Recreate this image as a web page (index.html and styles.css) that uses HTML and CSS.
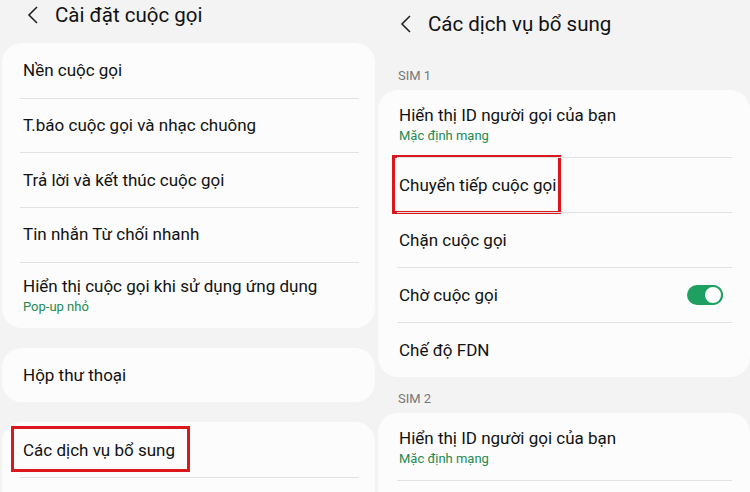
FILE: index.html
```html
<!DOCTYPE html>
<html lang="vi">
<head>
    <meta charset="UTF-8">
    <title>Cài đặt cuộc gọi</title>
    <link rel="stylesheet" href="styles.css">
</head>
<body>

<div class="screens">
    <!-- Màn hình 1: cài đặt cuộc gọi -->
    <section class="screen screen-left">
        <header class="topbar">
            <svg class="back" viewBox="0 0 12 20" width="12" height="20"><path d="M10 2 L2 10 L10 18" fill="none" stroke="#222" stroke-width="1.6"/></svg>
            <h1>Cài đặt cuộc gọi</h1>
        </header>

        <div class="card">
            <div class="row">Nền cuộc gọi</div>
            <div class="row">T.báo cuộc gọi và nhạc chuông</div>
            <div class="row">Trả lời và kết thúc cuộc gọi</div>
            <div class="row">Tin nhắn Từ chối nhanh</div>
            <div class="row two-line">
                <span>Hiển thị cuộc gọi khi sử dụng ứng dụng</span>
                <span class="sub">Pop-up nhỏ</span>
            </div>
        </div>

        <div class="card">
            <div class="row">Hộp thư thoại</div>
        </div>

        <div class="card">
            <div class="row"><span class="mark mark-services">Các dịch vụ bổ sung</span></div>
            <div class="row"></div>
        </div>
    </section>

    <!-- Màn hình 2: các dịch vụ bổ sung -->
    <section class="screen screen-right">
        <header class="topbar">
            <svg class="back" viewBox="0 0 12 20" width="12" height="20"><path d="M10 2 L2 10 L10 18" fill="none" stroke="#222" stroke-width="1.6"/></svg>
            <h1>Các dịch vụ bổ sung</h1>
        </header>

        <p class="group">SIM 1</p>
        <div class="card">
            <div class="row two-line">
                <span>Hiển thị ID người gọi của bạn</span>
                <span class="sub">Mặc định mạng</span>
            </div>
            <div class="row"><span class="mark mark-forward">Chuyển tiếp cuộc gọi</span></div>
            <div class="row">Chặn cuộc gọi</div>
            <div class="row">
                <span>Chờ cuộc gọi</span>
                <span class="switch"></span>
            </div>
            <div class="row">Chế độ FDN</div>
        </div>

        <p class="group">SIM 2</p>
        <div class="card">
            <div class="row two-line">
                <span>Hiển thị ID người gọi của bạn</span>
                <span class="sub">Mặc định mạng</span>
            </div>
            <div class="row"></div>
        </div>
    </section>
</div>

</body>
</html>
```

FILE: styles.css
```css
body {
    margin: 0;
    padding: 0;
    background-color: #f3f3f3;
    font-family: Roboto, "Noto Sans", Arial, sans-serif;
    color: #111;
}
.screens {
    display: flex;
    width: 750px;
    height: 492px;
    overflow: hidden;
}
.screen {
    background-color: #f3f3f3;
    overflow: hidden;
}
.screen-left {
    width: 373px;
    padding-left: 2px;
}
.screen-right {
    width: 372px;
    padding-left: 3px;
}

/* thanh tiêu đề */
.topbar {
    display: flex;
    align-items: center;
}
.screen-left .topbar {
    height: 30px;
    margin-bottom: 13px;
    padding-left: 25px;
}
.screen-right .topbar {
    height: 48px;
    margin-bottom: 6px;
    padding-left: 22px;
}
.topbar h1 {
    margin: 0 0 0 16px;
    font-size: 20.5px;
    font-weight: 400;
    color: #111;
}
.back {
    flex-shrink: 0;
}

/* nhãn nhóm SIM */
.group {
    margin: 0;
    padding: 8px 0 0 20px;
    height: 28px;
    line-height: 28px;
    font-size: 13px;
    color: #777;
}

/* thẻ danh sách */
.card {
    background-color: #fcfcfc;
    border-radius: 20px;
}
.screen-left .card {
    margin-bottom: 20px;
}
.row {
    position: relative;
    display: flex;
    align-items: center;
    justify-content: space-between;
    height: 54.7px;
    padding: 0 27px 0 21px;
    font-size: 17px;
}
.row + .row::after {
    content: "";
    position: absolute;
    top: 0;
    left: 18px;
    right: 16px;
    height: 1px;
    background-color: #e2e2e2;
}
.screen-right .row + .row::after {
    left: 19px;
    right: 18px;
}
.screen-right .row {
    height: 55px;
}
.screen-left .two-line {
    height: 66px;
}
.screen-right .two-line {
    height: 67px;
}
.two-line {
    flex-direction: column;
    align-items: flex-start;
    justify-content: center;
}
.sub {
    margin-top: 3px;
    font-size: 13px;
    color: #1d8a50;
}

/* khung đỏ đánh dấu */
.mark {
    position: relative;
}
.mark::after {
    content: "";
    position: absolute;
    border: 3px solid #d9171c;
}
.mark-services::after {
    left: -12px;
    right: -15px;
    top: -14px;
    bottom: -12px;
}
.mark-forward::after {
    left: -7px;
    right: -5px;
    top: -20px;
    bottom: -19px;
}

/* công tắc */
.switch {
    position: relative;
    width: 36px;
    height: 20px;
    border-radius: 10px;
    background-color: #1ea160;
}
.switch::after {
    content: "";
    position: absolute;
    top: 0;
    right: 0;
    width: 16px;
    height: 16px;
    border-radius: 50%;
    background-color: #fff;
    border: 2px solid #1ea160;
}
```
